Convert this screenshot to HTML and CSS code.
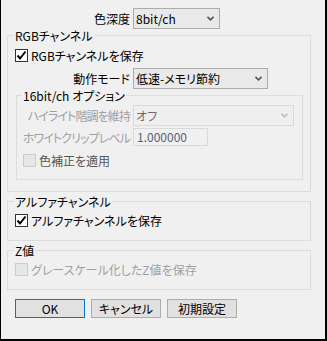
FILE: index.html
```html
<!doctype html>
<html>
	<head>
		<meta http-equiv="Content-Type" content="text/html;charset=UTF-8"/>
		<title>保存オプション</title>
		<link rel="stylesheet" href="styles.css">
	</head>
<body>
	<div class="dialog">
		<div class="row">
			<span class="lbl lbl-top"><span>色深度</span></span>
			<div class="combo combo-depth"><span>8bit/ch</span><svg class="arrow" width="7" height="5" viewBox="0 0 7 5"><polyline points="0.5,0.8 3.5,3.8 6.5,0.8" fill="none" stroke="#555" stroke-width="1.6"/></svg></div>
		</div>

		<fieldset class="group">
			<legend>RGBチャンネル</legend>
			<label class="check check-first"><span class="box on"><svg width="11" height="11" viewBox="0 0 11 11"><polyline points="1.5,5.5 4,8.5 9.5,1.5" fill="none" stroke="#000" stroke-width="2"/></svg></span>RGBチャンネルを保存</label>
			<div class="row row-mode">
				<span class="lbl lbl-rgb"><span>動作モード</span></span>
				<div class="combo combo-mode"><span>低速-メモリ節約</span><svg class="arrow" width="7" height="5" viewBox="0 0 7 5"><polyline points="0.5,0.8 3.5,3.8 6.5,0.8" fill="none" stroke="#555" stroke-width="1.6"/></svg></div>
			</div>

			<fieldset class="group sub">
				<legend>16bit/ch オプション</legend>
				<div class="row row-hl">
					<span class="lbl lbl-sub off"><span>ハイライト階調を維持</span></span>
					<div class="combo combo-hl disabled"><span>オフ</span><svg class="arrow" width="7" height="5" viewBox="0 0 7 5"><polyline points="0.5,0.8 3.5,3.8 6.5,0.8" fill="none" stroke="#bdbdbd" stroke-width="1.6"/></svg></div>
				</div>
				<div class="row row-clip">
					<span class="lbl lbl-sub off"><span>ホワイトクリップレベル</span></span>
					<div class="field">1.000000</div>
				</div>
				<label class="check check-sub"><span class="box dis"></span><span class="half">色補正を適用</span></label>
			</fieldset>
		</fieldset>

		<fieldset class="group gap">
			<legend>アルファチャンネル</legend>
			<label class="check check-first"><span class="box on"><svg width="11" height="11" viewBox="0 0 11 11"><polyline points="1.5,5.5 4,8.5 9.5,1.5" fill="none" stroke="#000" stroke-width="2"/></svg></span>アルファチャンネルを保存</label>
		</fieldset>

		<fieldset class="group gap">
			<legend>Z値</legend>
			<label class="check check-first off"><span class="box dis"></span>グレースケール化したZ値を保存</label>
		</fieldset>

		<div class="buttons">
			<button class="btn default">OK</button>
			<button class="btn">キャンセル</button>
			<button class="btn">初期設定</button>
		</div>
	</div>
</body>
</html>
```

FILE: styles.css
```css
/*ダイアログ全体*/
*{margin:0;padding:0;box-sizing:border-box;}
body{background:#fff;}
.dialog{width:327px;height:341px;background:#f0f0f0;border-left:1px solid #000;border-right:2px solid #000;border-bottom:2px solid #000;padding:8px 14px 0 6px;font-family:"Noto Sans CJK JP","Noto Sans",sans-serif;font-size:12px;line-height:13px;color:#000;font-feature-settings:"palt";}

/*行とラベル*/
.row{display:flex;align-items:center;height:21px;}
.lbl{display:flex;justify-content:flex-end;margin-right:3px;white-space:nowrap;flex-shrink:0;}
.lbl span{flex-shrink:0;}
.lbl-top{width:123px;}
.lbl-rgb{width:115px;}
.lbl-sub{width:107px;letter-spacing:-0.9px;}
.off{color:#a0a0a0;}
.half{color:#555;}

/*グループボックス*/
.group{border:1px solid #dcdcdc;padding:0 7px 11px 7px;min-width:0;}
.group legend{padding:0 1px;margin-left:-1px;line-height:13px;}
.group.gap{margin-top:3px;}
.group.sub{margin-left:1px;padding:0 8px 10px 6px;}

/*コンボボックス*/
.combo{height:21px;border:1px solid #acacac;background:#e9e9e9;display:flex;align-items:center;justify-content:space-between;padding:0 5px 0 2px;}
.combo.disabled{border-color:#d9d9d9;background:#efefef;color:#6d6d6d;}
.combo-depth{width:87px;}
.combo-mode{width:135px;}
.combo-hl{flex:1;}
.arrow{display:block;}
.field{width:75px;height:18px;border:1px solid #d9d9d9;background:#f0f0f0;color:#56607a;padding:0 3px;line-height:16px;}

.row-mode{margin-top:4px;}
.row-hl{margin-top:3px;}
.row-clip{margin-top:2px;height:18px;}

/*チェックボックス*/
.check{display:flex;align-items:center;height:17px;white-space:nowrap;}
.check-first{margin-top:5px;}
.check-sub{margin-top:6px;}
.group.gap .check-first{margin-top:4px;}
.box{width:13px;height:13px;border:1px solid #333;background:#fff;margin-right:3px;display:flex;align-items:center;justify-content:center;}
.box.dis{border-color:#cccccc;background:#e6e6e6;}

/*ボタン*/
.buttons{display:flex;gap:6px;margin-top:9px;padding-left:8px;}
.btn{width:70px;height:19px;border:1px solid #adadad;background:#e1e1e1;font-family:inherit;font-size:12px;line-height:15px;color:#000;font-feature-settings:"palt";}
.btn.default{border-color:#0078d7;}
```
